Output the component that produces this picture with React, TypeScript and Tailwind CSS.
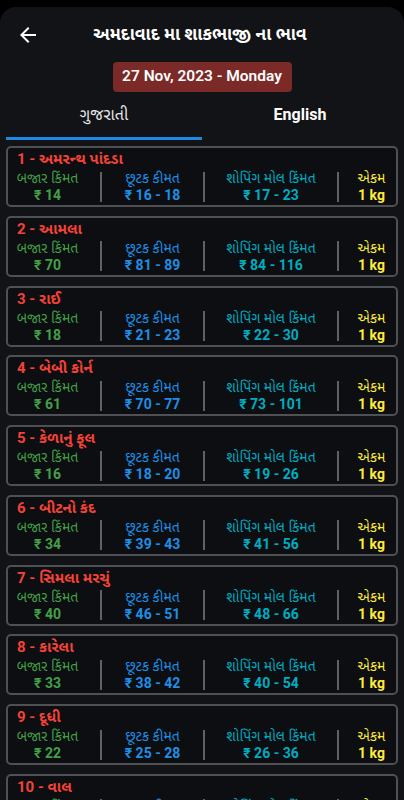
import React from "react";
import { MdArrowBack } from "react-icons/md";

type Item = { name: string; m: string; r: string; s: string };

const items: Item[] = [
  { name: "1 - અમરન્થ પાંદડા", m: "₹ 14", r: "₹ 16 - 18", s: "₹ 17 - 23" },
  { name: "2 - આમલા", m: "₹ 70", r: "₹ 81 - 89", s: "₹ 84 - 116" },
  { name: "3 - રાઈ", m: "₹ 18", r: "₹ 21 - 23", s: "₹ 22 - 30" },
  { name: "4 - બેબી કોર્ન", m: "₹ 61", r: "₹ 70 - 77", s: "₹ 73 - 101" },
  { name: "5 - કેળાનું ફૂલ", m: "₹ 16", r: "₹ 18 - 20", s: "₹ 19 - 26" },
  { name: "6 - બીટનો કંદ", m: "₹ 34", r: "₹ 39 - 43", s: "₹ 41 - 56" },
  { name: "7 - સિમલા મરચું", m: "₹ 40", r: "₹ 46 - 51", s: "₹ 48 - 66" },
  { name: "8 - કારેલા", m: "₹ 33", r: "₹ 38 - 42", s: "₹ 40 - 54" },
  { name: "9 - દૂધી", m: "₹ 22", r: "₹ 25 - 28", s: "₹ 26 - 36" },
  { name: "10 - વાલ", m: "₹ 28", r: "₹ 32 - 36", s: "₹ 34 - 46" },
];

const font = { fontFamily: 'Roboto, "Noto Sans Gujarati", "Noto Sans", sans-serif' };

function Divider() {
  return <div className="w-[2px] h-[30px] self-center bg-[#5f6163] shrink-0" />;
}

function Card({ it }: { it: Item }) {
  return (
    <div className="h-[61px] shrink-0 rounded-[5px] border-2 border-[#4e5053] bg-[#0c0e11] pt-[1px]">
      <div className="pl-[9px] text-[15px] leading-[20px] font-bold text-[#f44336] whitespace-nowrap">
        {it.name}
      </div>
      <div className="flex h-[35px]">
        <div className="w-[92px] pr-[13px] flex flex-col items-center text-[#43a047]">
          <div className="text-[14px] leading-[18px] whitespace-nowrap">બજાર કિંમત</div>
          <div className="text-[14px] leading-[17px] font-bold whitespace-nowrap">{it.m}</div>
        </div>
        <Divider />
        <div className="w-[101px] flex flex-col items-center text-[#1e8ee8]">
          <div className="text-[14px] leading-[18px] whitespace-nowrap">છૂટક કીમત</div>
          <div className="text-[14px] leading-[17px] font-bold whitespace-nowrap">{it.r}</div>
        </div>
        <Divider />
        <div className="w-[132px] flex flex-col items-center text-[#00acc1]">
          <div className="text-[14px] leading-[18px] whitespace-nowrap">શોપિંગ મોલ કિંમત</div>
          <div className="text-[14px] leading-[17px] font-bold whitespace-nowrap">{it.s}</div>
        </div>
        <Divider />
        <div className="flex-1 pl-[8px] flex flex-col items-center text-[#ffeb3b]">
          <div className="text-[14px] leading-[18px] whitespace-nowrap">એકમ</div>
          <div className="text-[14px] leading-[17px] font-bold whitespace-nowrap">1 kg</div>
        </div>
      </div>
    </div>
  );
}

export default function App() {
  return (
    <div className="w-[404px] h-[800px] bg-black overflow-hidden pt-[7px]" style={font}>
      <div className="h-[900px] rounded-t-[16px] bg-[#111317] flex flex-col">
        <div className="h-[55px] relative flex items-center justify-center shrink-0">
          <MdArrowBack className="absolute left-[16px] top-[16px] text-white" size={24} />
          <div className="text-white text-[17.5px] font-bold pr-[4px] whitespace-nowrap">
            અમદાવાદ મા શાકભાજી ના ભાવ
          </div>
        </div>
        <div className="flex justify-center shrink-0">
          <div className="w-[179px] h-[30px] rounded-[4px] bg-[#7b2a27] flex items-center justify-center text-white text-[15.5px] font-semibold whitespace-nowrap">
            27 Nov, 2023 - Monday
          </div>
        </div>
        <div className="flex px-[6px] pt-[12px] shrink-0">
          <div className="flex-1 flex flex-col items-center">
            <div className="h-[22px] leading-[22px] text-[16px] text-[#e8e8e8]">ગુજરાતી</div>
            <div className="mt-[11px] h-[3px] w-full bg-[#1e88e5]" />
          </div>
          <div className="flex-1 flex flex-col items-center">
            <div className="h-[22px] leading-[22px] text-[16px] font-bold text-white">English</div>
            <div className="mt-[11px] h-[3px] w-full" />
          </div>
        </div>
        <div className="flex flex-col gap-[8.75px] px-[6px] pt-[6px]">
          {items.map((it) => (
            <Card key={it.name} it={it} />
          ))}
        </div>
      </div>
    </div>
  );
}
